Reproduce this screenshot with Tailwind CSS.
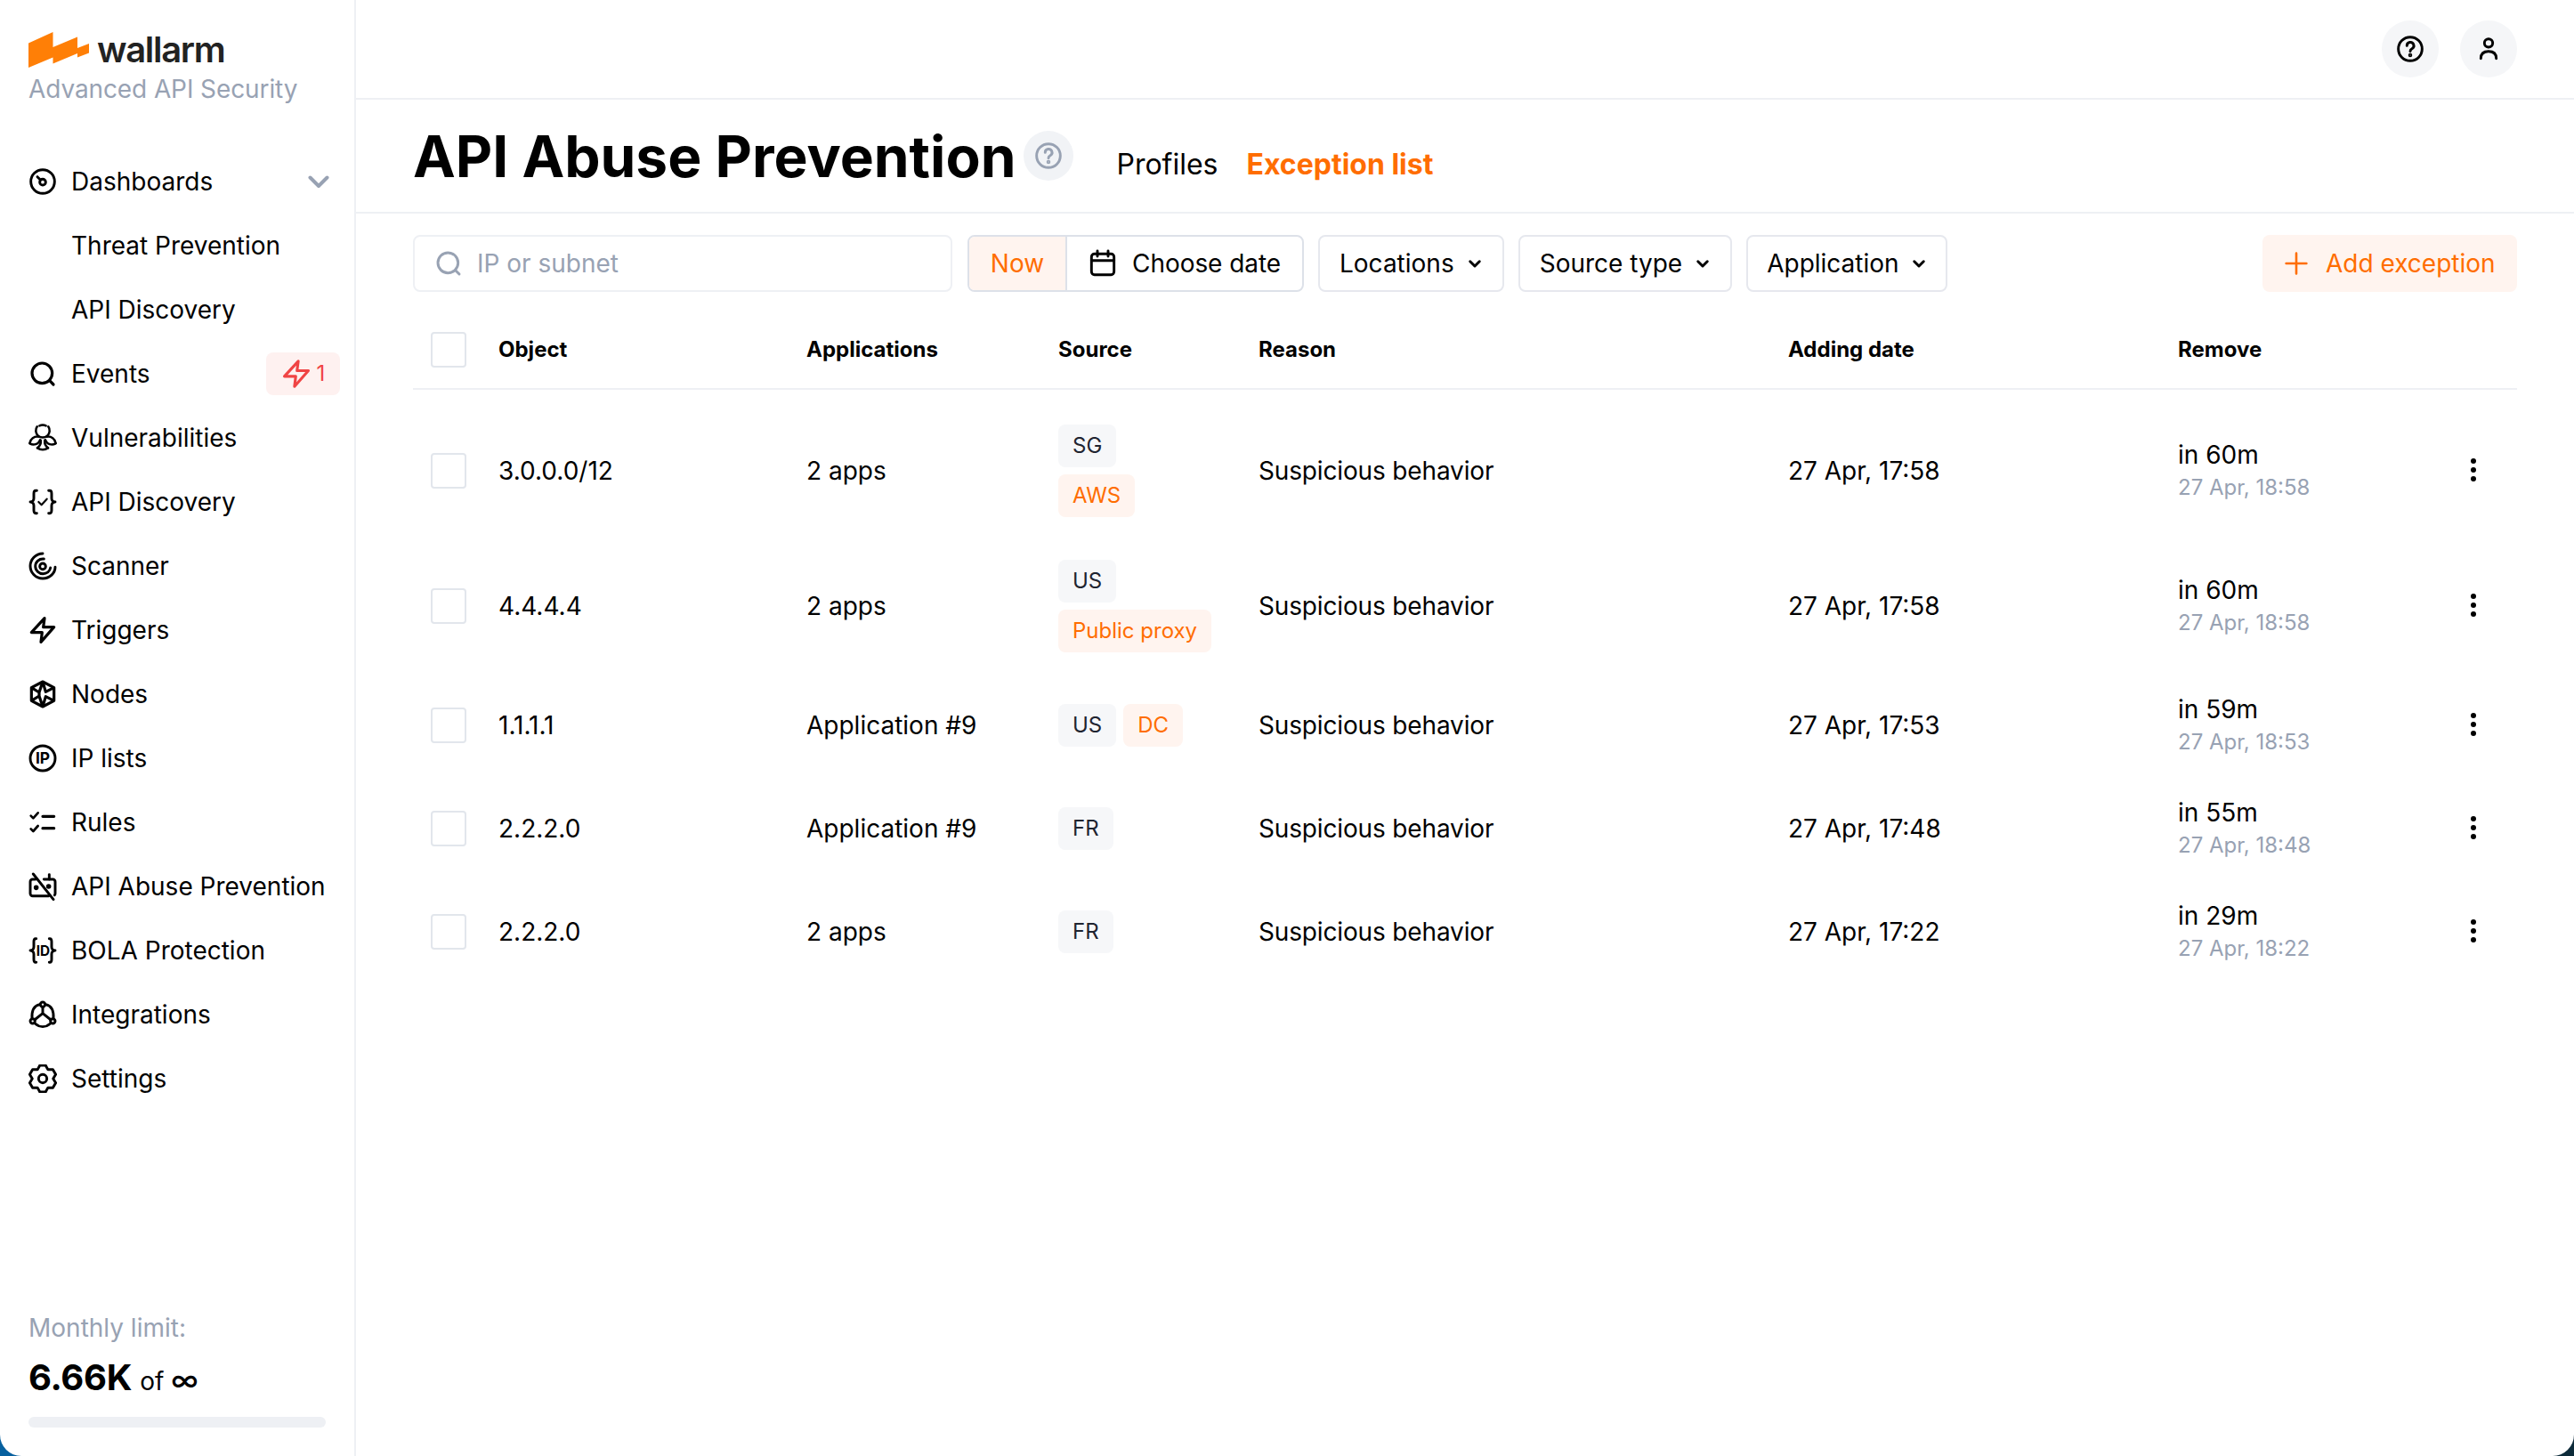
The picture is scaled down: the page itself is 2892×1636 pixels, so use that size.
<!DOCTYPE html>
<html lang="en">
<head>
<meta charset="utf-8">
<script src="https://cdn.jsdelivr.net/npm/@tailwindcss/browser@4"></script>
<title>API Abuse Prevention</title>
</head>
<body class="m-0 bg-[linear-gradient(90deg,#07609f_0%,#0d2b3a_100%)]">
<div class="w-[2892px] h-[1636px] overflow-hidden flex bg-white rounded-b-[24px] font-['Inter'] text-[28px] text-black">

<!-- Sidebar -->
<aside class="w-[400px] h-full shrink-0 border-r-2 border-[#eef0f4] flex flex-col">
  <div class="h-[168px] pl-[32px] pt-[36px] shrink-0">
    <div class="flex items-center gap-[9px] h-[40px]">
      <svg class="w-[68px] h-[40px] shrink-0" viewBox="32 36 68 40"><path fill="#ff7f06" d="M32 48.500 59.500 36V53L87 41.500V54L100 49V59.500L87 64.500V60L59.500 71.500V64.500L32 76Z"/></svg>
      <span class="text-[40px] leading-[40px] font-semibold tracking-[-1.300px] text-[#222]">wallarm</span>
    </div>
    <div class="text-[28px] leading-[36px] mt-[6px] text-[#98a2b3] tracking-[-0.100px]">Advanced API Security</div>
  </div>
  <nav class="flex flex-col">
    <div class="h-[72px] flex items-center pl-[32px] pr-[16px] gap-[16px]">
      <svg class="w-[32px] h-[32px] shrink-0" viewBox="0 0 24 24" fill="none" stroke="#000" stroke-width="2.200" stroke-linecap="round"><circle cx="12" cy="12" r="10"/><circle cx="12" cy="12.500" r="2.500"/><path d="M10 10.500 7.500 8"/></svg>
      <span class="flex-1">Dashboards</span>
      <svg class="w-[24px] h-[24px] mr-[12px]" viewBox="0 0 24 24" fill="none" stroke="#98a2b3" stroke-width="4" stroke-linecap="round" stroke-linejoin="round"><path d="M2.500 7.500 12 17l9.500-9.500"/></svg>
    </div>
    <div class="h-[72px] flex items-center pl-[80px]">Threat Prevention</div>
    <div class="h-[72px] flex items-center pl-[80px]">API Discovery</div>
    <div class="h-[72px] flex items-center pl-[32px] pr-[16px] gap-[16px]">
      <svg class="w-[32px] h-[32px] shrink-0" viewBox="0 0 24 24" fill="none" stroke="#000" stroke-width="2.400" stroke-linecap="round"><circle cx="11.500" cy="11.500" r="8.500"/><path d="M17.800 17.800 21 21"/></svg>
      <span class="flex-1">Events</span>
      <span class="w-[83px] h-[48px] rounded-[8px] bg-[#fef1f0] flex items-center justify-center gap-[6px] text-[#f04444] text-[24px]">
        <svg class="w-[34px] h-[34px] shrink-0" viewBox="0 0 24 24" fill="none" stroke="#f04444" stroke-width="2.200" stroke-linejoin="round"><path d="M13.500 2 2.500 14h9l-1 8 11-12.500h-9z"/></svg>1
      </span>
    </div>
    <div class="h-[72px] flex items-center pl-[32px] gap-[16px]">
      <svg class="w-[32px] h-[32px] shrink-0" viewBox="0 0 24 24" fill="none" stroke="#000" stroke-width="1.900" stroke-linecap="round"><path d="M7.300 2.500A5.800 5.800 0 1 0 16.700 2.500"/><path d="M9.300 1.800a6.500 6.500 0 0 1 5.400 0"/><path d="M1 16.500a6.500 6.500 0 0 1 7.500-5.500"/><path d="M1.200 16.800c3 1.800 7.200.7 8.600-3"/><path d="M23 16.500a6.500 6.500 0 0 0-7.500-5.500"/><path d="M22.800 16.800c-3 1.800-7.200.7-8.600-3"/><path d="M7.500 20.500c2.500 2 6.500 2 9 0"/><path d="M10.300 14c.3 2.500-.3 4.800-2.800 6.500M13.700 14c-.3 2.500.3 4.800 2.800 6.500"/></svg>
      <span>Vulnerabilities</span>
    </div>
    <div class="h-[72px] flex items-center pl-[32px] gap-[16px]">
      <svg class="w-[32px] h-[32px] shrink-0" viewBox="0 0 24 24" fill="none" stroke="#000" stroke-width="2.200" stroke-linecap="round" stroke-linejoin="round"><path d="M7 2.500H6C4.800 2.500 4.500 3.500 4.500 5v4c0 1.500-1 3-3 3 2 0 3 1.500 3 3v4c0 1.500.3 2.500 1.500 2.500h1"/><path d="M17 2.500h1c1.200 0 1.500 1 1.500 2.500v4c0 1.500 1 3 3 3-2 0-3 1.500-3 3v4c0 1.500-.3 2.500-1.500 2.500h-1"/><path d="m8.500 12 2.500 2.500 4.500-5" stroke-width="1.600"/></svg>
      <span>API Discovery</span>
    </div>
    <div class="h-[72px] flex items-center pl-[32px] gap-[16px]">
      <svg class="w-[32px] h-[32px] shrink-0" viewBox="0 0 24 24" fill="none" stroke="#000" stroke-width="2.200" stroke-linecap="round"><path d="M12 1.500C6 1.500 1.500 6.500 1.500 12S6 22.500 12 22.500 22.500 18 22.500 13"/><path d="M13 6C9 5.500 5.800 8.500 5.800 12.200S9 18.500 12.200 18.500s5.800-2 6.300-5"/><circle cx="12" cy="12.300" r="2.500"/></svg>
      <span>Scanner</span>
    </div>
    <div class="h-[72px] flex items-center pl-[32px] gap-[16px]">
      <svg class="w-[32px] h-[32px] shrink-0" viewBox="0 0 24 24" fill="none" stroke="#000" stroke-width="2.400" stroke-linejoin="round"><path d="M13.500 2 2.500 14h9l-1 8 11-12.500h-9z"/></svg>
      <span>Triggers</span>
    </div>
    <div class="h-[72px] flex items-center pl-[32px] gap-[16px]">
      <svg class="w-[32px] h-[32px] shrink-0" viewBox="0 0 24 24" fill="none" stroke="#000" stroke-width="2.400" stroke-linejoin="round"><path d="M12 1.500 21.500 6.500v11L12 22.500 2.500 17.500v-11z"/><path d="M12 1.500 14.500 10l7-3.500M12 22.500 14.500 14l7 3.500M2.500 6.500 9 10.500 12 1.500M2.500 17.500 9 13.500l3 9M9 10.500v3"/></svg>
      <span>Nodes</span>
    </div>
    <div class="h-[72px] flex items-center pl-[32px] gap-[16px]">
      <svg class="w-[32px] h-[32px] shrink-0" viewBox="0 0 24 24" fill="none" stroke="#000" stroke-width="2.200"><circle cx="12" cy="12" r="10.500"/><text x="12" y="16.800" text-anchor="middle" font-family="Inter" font-weight="700" font-size="13" fill="#000" stroke="none">IP</text></svg>
      <span>IP lists</span>
    </div>
    <div class="h-[72px] flex items-center pl-[32px] gap-[16px]">
      <svg class="w-[32px] h-[32px] shrink-0" viewBox="0 0 24 24" fill="none" stroke="#000" stroke-width="2.400" stroke-linecap="round" stroke-linejoin="round"><path d="M2 6.500 4 8.500 8 4M2 17.500l2 2 4-4.500" stroke-width="2"/><path d="M12 7h9.500M12 17h9.500"/></svg>
      <span>Rules</span>
    </div>
    <div class="h-[72px] flex items-center pl-[32px] gap-[16px]">
      <svg class="w-[32px] h-[32px] shrink-0" viewBox="0 0 24 24" fill="none" stroke="#000" stroke-width="2.200" stroke-linecap="round" stroke-linejoin="round"><path d="M4 1.500 21 23"/><path d="M6 6H3.500C2.400 6 1.500 6.900 1.500 8v10c0 1.100.9 2 2 2H17M13 6h7.500c1.100 0 2 .9 2 2v10c0 .5-.2 1-.5 1.300"/><path d="M17.500 2v4"/><circle cx="6.500" cy="13" r="1" fill="#000"/><circle cx="17" cy="12" r="1" fill="#000"/></svg>
      <span>API Abuse Prevention</span>
    </div>
    <div class="h-[72px] flex items-center pl-[32px] gap-[16px]">
      <svg class="w-[32px] h-[32px] shrink-0" viewBox="0 0 24 24" fill="none" stroke="#000" stroke-width="2.200" stroke-linecap="round" stroke-linejoin="round"><path d="M6.500 2H6C4.800 2 4.500 3 4.500 4.500v4.500c0 1.500-1 3-3 3 2 0 3 1.500 3 3v4.500c0 1.500.3 2.500 1.500 2.500h.5"/><path d="M17.500 2h.5c1.200 0 1.500 1 1.500 2.500v4.500c0 1.500 1 3 3 3-2 0-3 1.500-3 3v4.500c0 1.500-.3 2.500-1.500 2.500h-.5"/><text x="12.300" y="16.300" text-anchor="middle" font-family="Inter" font-weight="700" font-size="11.500" fill="#000" stroke="none">ID</text></svg>
      <span>BOLA Protection</span>
    </div>
    <div class="h-[72px] flex items-center pl-[32px] gap-[16px]">
      <svg class="w-[32px] h-[32px] shrink-0" viewBox="0 0 24 24" fill="none" stroke="#000" stroke-width="2.200" stroke-linecap="round" stroke-linejoin="round"><circle cx="12" cy="3.500" r="2"/><circle cx="3.500" cy="17.500" r="2"/><circle cx="20.500" cy="17.500" r="2"/><path d="M12 5.500V11M5.300 16.300 12 11l6.700 5.300"/><path d="M9.500 3.500C5 4.500 2.500 8.500 3 15.500M14.500 3.500c4.500 1 7 5 6.500 12M5.500 19.500c4 3.500 9 3.500 13 0"/></svg>
      <span>Integrations</span>
    </div>
    <div class="h-[72px] flex items-center pl-[32px] gap-[16px]">
      <svg class="w-[32px] h-[32px] shrink-0" viewBox="0 0 24 24" fill="none" stroke="#000" stroke-width="2.200" stroke-linejoin="round"><path d="M14.390 .75H9.610L7.600 4.380 3.450 4.310 1.060 8.450 3.200 12 1.060 15.550 3.450 19.690 7.600 19.620 9.610 23.250H14.390L16.400 19.620 20.550 19.690 22.940 15.550 20.800 12 22.940 8.450 20.550 4.310 16.400 4.380Z"/><circle cx="12" cy="12" r="3.500"/></svg>
      <span>Settings</span>
    </div>
  </nav>
  <div class="mt-auto px-[32px] pb-[32px]">
    <div class="text-[28px] leading-[36px] text-[#98a2b3]">Monthly limit:</div>
    <div class="flex items-baseline mt-[14px] h-[48px] leading-[48px]">
      <span class="text-[40px] font-bold tracking-[-0.300px]">6.66K</span>
      <span class="ml-[9px]">of</span>
      <span class="ml-[8px] text-[32px] font-medium">∞</span>
    </div>
    <div class="h-[12px] rounded-full bg-[#eef0f4] mt-[20px]"></div>
  </div>
</aside>

<!-- Main -->
<main class="flex-1 min-w-0 flex flex-col">
  <header class="h-[112px] shrink-0 border-b-2 border-[#eef0f4] flex items-start justify-end pt-[23px] pr-[64px] gap-[24px]">
    <span class="w-[64px] h-[64px] rounded-full bg-[#f5f6f8] flex items-center justify-center">
      <svg class="w-[32px] h-[32px]" viewBox="0 0 24 24" fill="none" stroke="#000" stroke-width="2.200" stroke-linecap="round"><circle cx="12" cy="12" r="10"/><path d="M9.200 9.300a2.900 2.900 0 1 1 4.300 2.500c-1 .6-1.500 1.100-1.500 2.200"/><circle cx="12" cy="17.200" r=".6" fill="#000"/></svg>
    </span>
    <span class="w-[64px] h-[64px] rounded-full bg-[#f5f6f8] flex items-center justify-center">
      <svg class="w-[32px] h-[32px]" viewBox="0 0 24 24" fill="none" stroke="#000" stroke-width="2.200" stroke-linecap="round"><circle cx="12" cy="7" r="3.500"/><path d="M5.500 20c0-4 2.500-6 6.500-6s6.500 2 6.500 6"/></svg>
    </span>
  </header>

  <section class="h-[128px] shrink-0 border-b-2 border-[#eef0f4] pl-[64px] relative flex items-start">
    <h1 class="text-[64px] leading-[76px] font-bold mt-[26px]">API Abuse Prevention</h1>
    <span class="w-[56px] h-[56px] rounded-full bg-[#f1f3f6] flex items-center justify-center ml-[9px] mt-[35px]">
      <svg class="w-[32px] h-[32px]" viewBox="0 0 24 24" fill="none" stroke="#98a2b3" stroke-width="2.200" stroke-linecap="round"><circle cx="12" cy="12" r="10"/><path d="M9.200 9.300a2.900 2.900 0 1 1 4.300 2.500c-1 .6-1.500 1.100-1.500 2.200"/><circle cx="12" cy="17.200" r=".6" fill="#98a2b3"/></svg>
    </span>
    <span class="ml-[48px] mt-[55px] leading-[36px] text-[32px] font-normal">Profiles</span>
    <span class="ml-[32px] mt-[55px] leading-[36px] text-[32px] font-bold text-[#ff6d00]">Exception list</span>
  </section>

  <section class="h-[88px] shrink-0 pt-[24px] pl-[64px] pr-[64px] flex items-start">
    <div class="w-[606px] h-[64px] border-2 border-[#eef0f4] rounded-[8px] flex items-center pl-[22px] gap-[16px] text-[#98a2b3]">
      <svg class="w-[32px] h-[32px]" viewBox="0 0 24 24" fill="none" stroke="#98a2b3" stroke-width="2.200" stroke-linecap="round"><circle cx="11.500" cy="11.500" r="8.500"/><path d="M17.800 17.800 21 21"/></svg>
      <span>IP or subnet</span>
    </div>
    <div class="ml-[17px] w-[378px] h-[64px] border-2 border-[#dde1e9] rounded-[8px] flex items-stretch overflow-hidden">
      <span class="w-[110px] bg-[#fff4ef] text-[#ff6d00] border-r-2 border-[#dde1e9] flex items-center justify-center">Now</span>
      <span class="flex items-center pl-[24px] gap-[17px] tracking-[-0.050px]">
        <svg class="w-[32px] h-[32px]" viewBox="0 0 24 24" fill="none" stroke="#000" stroke-width="2.200" stroke-linecap="round" stroke-linejoin="round"><rect x="2.500" y="4" width="19" height="17.500" rx="2.500"/><path d="M7.500 1.500V6M16.500 1.500V6M2.500 9.500h19"/></svg>
        Choose date
      </span>
    </div>
    <div class="ml-[16px] h-[64px] border-2 border-[#e6e8ee] rounded-[8px] flex items-center px-[22px] gap-[14px]">Locations
      <svg class="w-[18px] h-[18px]" viewBox="0 0 24 24" fill="none" stroke="#000" stroke-width="4" stroke-linecap="round" stroke-linejoin="round"><path d="M5 9l7 7 7-7"/></svg>
    </div>
    <div class="ml-[16px] h-[64px] border-2 border-[#e6e8ee] rounded-[8px] flex items-center px-[22px] gap-[14px]">Source type
      <svg class="w-[18px] h-[18px]" viewBox="0 0 24 24" fill="none" stroke="#000" stroke-width="4" stroke-linecap="round" stroke-linejoin="round"><path d="M5 9l7 7 7-7"/></svg>
    </div>
    <div class="ml-[16px] h-[64px] border-2 border-[#e6e8ee] rounded-[8px] flex items-center px-[21px] gap-[13px]">Application
      <svg class="w-[18px] h-[18px]" viewBox="0 0 24 24" fill="none" stroke="#000" stroke-width="4" stroke-linecap="round" stroke-linejoin="round"><path d="M5 9l7 7 7-7"/></svg>
    </div>
    <div class="ml-auto w-[286px] h-[64px] rounded-[8px] bg-[#fff4ef] text-[#ff6d00] flex items-center pl-[25px] gap-[20px]">
      <svg class="w-[26px] h-[26px]" viewBox="0 0 24 24" fill="none" stroke="#ff6d00" stroke-width="2.400" stroke-linecap="round"><path d="M12 1.500v21M1.500 12h21"/></svg>
      Add exception
    </div>
  </section>

  <section class="ml-[64px] mr-[64px]">
    <div class="h-[110px] pt-[22px] border-b-2 border-[#eef0f4] grid grid-cols-[96px_346px_283px_225px_595px_438px_260px_1fr] items-center text-[24px] font-bold mb-[15px]">
      <span class="pl-[20px]"><span class="block w-[40px] h-[40px] border-2 border-[#e2e6ec] rounded-[4px]"></span></span>
      <span>Object</span><span>Applications</span><span>Source</span><span>Reason</span><span>Adding date</span><span>Remove</span>
    </div>

    <div class="h-[152px] grid grid-cols-[96px_346px_283px_225px_595px_438px_260px_1fr] items-center">
      <span class="pl-[20px]"><span class="block w-[40px] h-[40px] border-2 border-[#e2e6ec] rounded-[4px]"></span></span>
      <span>3.0.0.0/12</span><span>2 apps</span>
      <span class="flex flex-col items-start gap-[8px] text-[24px]"><span class="h-[48px] px-[16px] rounded-[8px] bg-[#f6f7f9] text-[#1f2430] flex items-center">SG</span><span class="h-[48px] px-[16px] rounded-[8px] bg-[#fff4ef] text-[#ff6d00] flex items-center">AWS</span></span>
      <span class="tracking-[-0.150px]">Suspicious behavior</span><span>27 Apr, 17:58</span>
      <span class="flex flex-col"><span class="leading-[38px]">in 60m</span><span class="text-[24px] leading-[36px] text-[#98a2b3]">27 Apr, 18:58</span></span>
      <span class="flex justify-end pr-[37px]"><svg class="w-[24px] h-[32px]" viewBox="0 0 24 32" fill="#000"><circle cx="12" cy="5" r="3"/><circle cx="12" cy="15" r="3"/><circle cx="12" cy="25" r="3"/></svg></span>
    </div>

    <div class="h-[152px] grid grid-cols-[96px_346px_283px_225px_595px_438px_260px_1fr] items-center">
      <span class="pl-[20px]"><span class="block w-[40px] h-[40px] border-2 border-[#e2e6ec] rounded-[4px]"></span></span>
      <span>4.4.4.4</span><span>2 apps</span>
      <span class="flex flex-col items-start gap-[8px] text-[24px]"><span class="h-[48px] px-[16px] rounded-[8px] bg-[#f6f7f9] text-[#1f2430] flex items-center">US</span><span class="h-[48px] px-[16px] rounded-[8px] bg-[#fff4ef] text-[#ff6d00] flex items-center">Public proxy</span></span>
      <span class="tracking-[-0.150px]">Suspicious behavior</span><span>27 Apr, 17:58</span>
      <span class="flex flex-col"><span class="leading-[38px]">in 60m</span><span class="text-[24px] leading-[36px] text-[#98a2b3]">27 Apr, 18:58</span></span>
      <span class="flex justify-end pr-[37px]"><svg class="w-[24px] h-[32px]" viewBox="0 0 24 32" fill="#000"><circle cx="12" cy="5" r="3"/><circle cx="12" cy="15" r="3"/><circle cx="12" cy="25" r="3"/></svg></span>
    </div>

    <div class="h-[116px] grid grid-cols-[96px_346px_283px_225px_595px_438px_260px_1fr] items-center">
      <span class="pl-[20px]"><span class="block w-[40px] h-[40px] border-2 border-[#e2e6ec] rounded-[4px]"></span></span>
      <span>1.1.1.1</span><span>Application #9</span>
      <span class="flex items-start gap-[8px] text-[24px]"><span class="h-[48px] px-[16px] rounded-[8px] bg-[#f6f7f9] text-[#1f2430] flex items-center">US</span><span class="h-[48px] px-[16px] rounded-[8px] bg-[#fff4ef] text-[#ff6d00] flex items-center">DC</span></span>
      <span class="tracking-[-0.150px]">Suspicious behavior</span><span>27 Apr, 17:53</span>
      <span class="flex flex-col"><span class="leading-[38px]">in 59m</span><span class="text-[24px] leading-[36px] text-[#98a2b3]">27 Apr, 18:53</span></span>
      <span class="flex justify-end pr-[37px]"><svg class="w-[24px] h-[32px]" viewBox="0 0 24 32" fill="#000"><circle cx="12" cy="5" r="3"/><circle cx="12" cy="15" r="3"/><circle cx="12" cy="25" r="3"/></svg></span>
    </div>

    <div class="h-[116px] grid grid-cols-[96px_346px_283px_225px_595px_438px_260px_1fr] items-center">
      <span class="pl-[20px]"><span class="block w-[40px] h-[40px] border-2 border-[#e2e6ec] rounded-[4px]"></span></span>
      <span>2.2.2.0</span><span>Application #9</span>
      <span class="flex items-start text-[24px]"><span class="h-[48px] px-[16px] rounded-[8px] bg-[#f6f7f9] text-[#1f2430] flex items-center">FR</span></span>
      <span class="tracking-[-0.150px]">Suspicious behavior</span><span>27 Apr, 17:48</span>
      <span class="flex flex-col"><span class="leading-[38px]">in 55m</span><span class="text-[24px] leading-[36px] text-[#98a2b3]">27 Apr, 18:48</span></span>
      <span class="flex justify-end pr-[37px]"><svg class="w-[24px] h-[32px]" viewBox="0 0 24 32" fill="#000"><circle cx="12" cy="5" r="3"/><circle cx="12" cy="15" r="3"/><circle cx="12" cy="25" r="3"/></svg></span>
    </div>

    <div class="h-[116px] grid grid-cols-[96px_346px_283px_225px_595px_438px_260px_1fr] items-center">
      <span class="pl-[20px]"><span class="block w-[40px] h-[40px] border-2 border-[#e2e6ec] rounded-[4px]"></span></span>
      <span>2.2.2.0</span><span>2 apps</span>
      <span class="flex items-start text-[24px]"><span class="h-[48px] px-[16px] rounded-[8px] bg-[#f6f7f9] text-[#1f2430] flex items-center">FR</span></span>
      <span class="tracking-[-0.150px]">Suspicious behavior</span><span>27 Apr, 17:22</span>
      <span class="flex flex-col"><span class="leading-[38px]">in 29m</span><span class="text-[24px] leading-[36px] text-[#98a2b3]">27 Apr, 18:22</span></span>
      <span class="flex justify-end pr-[37px]"><svg class="w-[24px] h-[32px]" viewBox="0 0 24 32" fill="#000"><circle cx="12" cy="5" r="3"/><circle cx="12" cy="15" r="3"/><circle cx="12" cy="25" r="3"/></svg></span>
    </div>
  </section>
</main>
</div>
</body>
</html>
